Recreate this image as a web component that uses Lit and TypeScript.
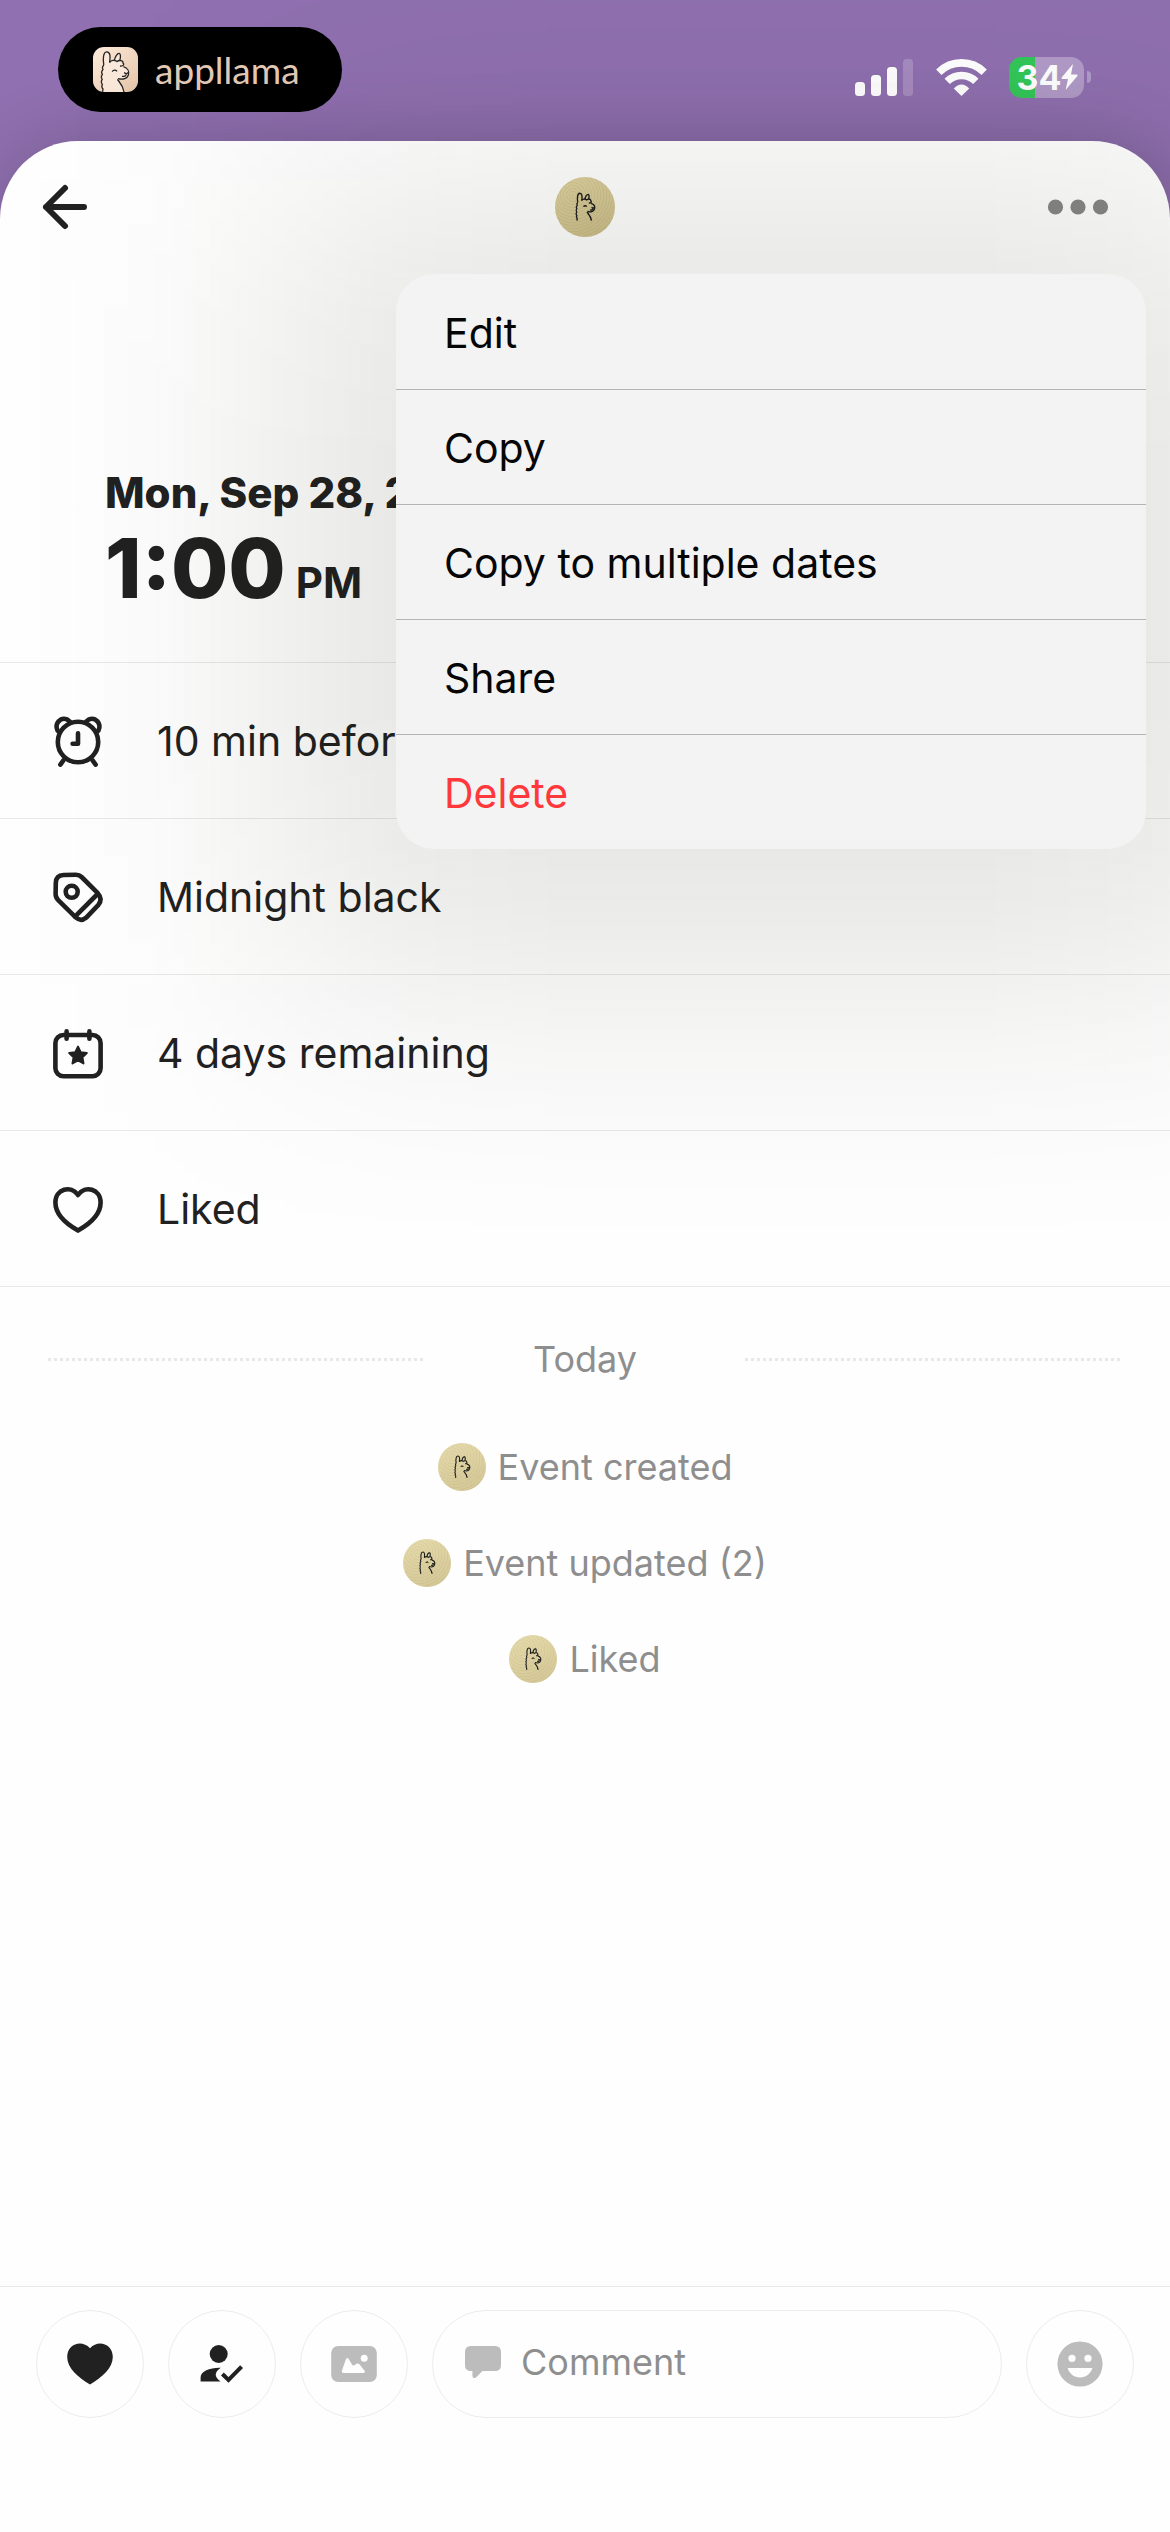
import { LitElement, html, css, svg } from 'lit';
import { customElement, property, state } from 'lit/decorators.js';
import { classMap } from 'lit/directives/class-map.js';

const llama = svg`
    <path d="M10.8 18C9.6 12 10.4 5 13.6 4.8C17.4 4.6 17.6 10 16.6 15.6" />
    <path d="M21.4 13.4C22 9.6 24.4 6.2 26.2 6.4C28 6.8 27.6 10.4 26.8 13.4" />
    <path d="M16.6 15.4C18 13 21.6 12.6 24 14.6C26.4 12.6 30.6 13.6 30 16C31.6 17.4 30.6 19.4 27 19" />
    <path d="M30.4 19.6C34.6 21 36.6 24.4 35.4 28C34.4 31.4 30 33 25 31.6" />
    <path d="M19.2 24.6C20.4 22.8 22.8 22.8 24 24.4M31 25.6L33.4 26.8L35.6 25.4M33 27.4C33 29 31 29.8 29 29.2" />
    <path d="M10.8 18Q8.6 20.4 10 22.6Q7.6 25 9.4 27.4Q7.4 30 9.2 32.4Q7.4 35 9.4 37.6Q8 40 10 42L9.6 45" />
    <path d="M24.4 32.4C26.4 35.4 30 38 31 45" />
`;

const icons: Record<string, unknown> = {
    alarm: svg`
        <circle cx="25" cy="26" r="20.2" />
        <path d="M4.6 14.6C1 7.6 7.6 .8 14 3.4L17.4 6M45.4 14.6C49 7.6 42.4 .8 36 3.4L32.6 6" />
        <path d="M25 17.4V27.8H19.6M10.4 44.4L7.4 48.6M39.6 44.4L42.6 48.6" />
    `,
    tag: svg`
        <path d="M10.5 3L23 2.8Q26.4 2.8 28.6 5L44.8 21.2Q50 27 45.4 32.8L33 45.8Q28 50 23 45.6L5.2 28.2Q2.6 25.6 2.6 22L2.8 11Q3 3.2 10.5 3Z" />
        <path d="M43.6 23L22 44.6" />
        <circle cx="18.7" cy="19.8" r="6" />
    `,
    calendar: svg`
        <rect x="2.4" y="7" width="45.2" height="41.2" rx="8" />
        <path d="M13.6 3.4V10.8M36.4 3.4V10.8" />
        <path class="solid" d="M25 18.6L27.7 24.2L33.8 25L29.4 29.3L30.5 35.4L25 32.4L19.5 35.4L20.6 29.3L16.2 25L22.3 24.2Z" />
    `,
    heart: svg`
        <path d="M25 11C18 1 2.4 4.6 2.4 18.6C2.4 30.4 14 40.4 25 46.6C36 40.4 47.6 30.4 47.6 18.6C47.6 4.6 32 1 25 11Z" />
    `,
};

interface Detail {
    icon: string;
    text: string;
}

@customElement('llama-avatar')
class LlamaAvatar extends LitElement {
    static styles = css`
        :host {
            display: block;
            width: 48px;
            height: 48px;
            border-radius: 50%;
            background: repeating-radial-gradient(
                    circle at 30% 30%,
                    rgba(120, 100, 40, 0.06) 0 1px,
                    transparent 1px 3px
                ),
                linear-gradient(160deg, #e6dbac, #d2c594);
        }

        :host([large]) {
            width: 60px;
            height: 60px;
            background: repeating-radial-gradient(
                    circle at 30% 30%,
                    rgba(120, 100, 40, 0.08) 0 1px,
                    transparent 1px 3px
                ),
                linear-gradient(160deg, #d4c899, #bcb07f);
        }

        svg {
            display: block;
            width: 100%;
            height: 100%;
            fill: none;
            stroke: #1b1b1b;
            stroke-width: 2;
        }
    `;

    @property({ type: Boolean, reflect: true }) large = false;

    render() {
        return html`
            <svg viewBox="0 0 60 60" aria-hidden="true">
                <g transform="translate(15.4 13) scale(.68)">${llama}</g>
            </svg>
        `;
    }
}

@customElement('status-bar')
class StatusBar extends LitElement {
    static styles = css`
        :host {
            display: flex;
            justify-content: space-between;
            align-items: center;
            padding: 27px 79px 29px 58px;
        }

        .pill {
            display: flex;
            align-items: center;
            gap: 17px;
            box-sizing: border-box;
            height: 85px;
            padding: 0 42px 0 35px;
            border-radius: 43px;
            background: #000;
            color: #e3cbb8;
            font-family: 'Lato', sans-serif;
            font-size: 37px;
            line-height: 44px;
        }

        .logo {
            width: 45px;
            height: 45px;
            border-radius: 11px;
            background: linear-gradient(135deg, #fdebdc, #e6c6a9);
            fill: none;
            stroke: #262626;
            stroke-width: 1.3;
        }

        .indicators {
            display: flex;
            align-items: center;
            gap: 22px;
            padding-top: 15px;
            color: #fff;
        }

        .indicators svg {
            display: block;
            fill: currentColor;
        }

        .battery {
            display: flex;
            align-items: center;
            gap: 3px;
        }

        .level {
            display: flex;
            align-items: center;
            justify-content: center;
            box-sizing: border-box;
            width: 75px;
            height: 41px;
            padding-left: 2px;
            border-radius: 13px;
            background: linear-gradient(
                to right,
                #34c759 35%,
                rgba(255, 255, 255, 0.3) 35%
            );
            font-family: 'Inter', sans-serif;
            font-size: 34px;
            font-weight: 700;
            line-height: 41px;
        }

        .cap {
            width: 4px;
            height: 12px;
            border-radius: 0 4px 4px 0;
            background: rgba(255, 255, 255, 0.3);
        }
    `;

    render() {
        return html`
            <div class="pill">
                <svg class="logo" viewBox="0 0 45 45" aria-hidden="true">
                    <path
                        d="M11 18L12 6L15 6L17 15L22 13L26 7L27 14L31 19L36 25L33 31L25 32L31 45H10L9 28Z"
                        fill="#fbeadb"
                        stroke="none"
                    />
                    ${llama}
                </svg>
                <span>appllama</span>
            </div>
            <div class="indicators">
                <svg width="59" height="37" viewBox="0 0 59 37" aria-hidden="true">
                    <rect y="23" width="10" height="14" rx="3.5" />
                    <rect x="16" y="16" width="10" height="21" rx="3.5" />
                    <rect x="32" y="8" width="10" height="29" rx="3.5" />
                    <rect x="48" width="10" height="37" rx="3.5" opacity=".2" />
                </svg>
                <svg width="51" height="37" viewBox="0 0 51 37" aria-hidden="true">
                    <g fill="none" stroke="currentColor" stroke-width="7.6">
                        <path d="M2.8 13.2A32.4 32.4 0 0 1 48.2 13.2" />
                        <path d="M11.2 22.4A20.4 20.4 0 0 1 39.8 22.4" />
                    </g>
                    <path d="M25.5 37L17.8 29.6Q25.5 21.6 33.2 29.6Z" />
                </svg>
                <div class="battery">
                    <div class="level">
                        <span>34</span>
                        <svg width="17" height="26" viewBox="0 0 17 26" aria-hidden="true">
                            <path d="M12 0L.6 13.6Q0 15 1.4 15H7L4.6 26L16.4 12Q17 10.6 15.6 10.6H10Z" />
                        </svg>
                    </div>
                    <div class="cap"></div>
                </div>
            </div>
        `;
    }
}

@customElement('app-root')
class AppRoot extends LitElement {
    static styles = css`
        :host {
            display: flex;
            flex-direction: column;
            min-height: 100vh;
            overflow: hidden;
            background: #9070b0;
            color: #212121;
            font-family: 'Inter', sans-serif;
            font-size: 41px;
            line-height: 48px;
        }

        * {
            box-sizing: border-box;
        }

        button {
            display: block;
            margin: 0;
            padding: 0;
            border: none;
            background: none;
            color: inherit;
            font: inherit;
            cursor: pointer;
        }

        ul {
            margin: 0;
            padding: 0;
            list-style: none;
        }

        svg {
            display: block;
        }

        .sheet {
            display: flex;
            flex: 1;
            flex-direction: column;
            border-radius: 78px 78px 0 0;
            background: #fefefe;
            box-shadow: 0 0 70px rgba(0, 0, 0, 0.18);
        }

        header {
            position: relative;
            z-index: 1;
            display: grid;
            grid-template-columns: 1fr auto 1fr;
            align-items: center;
            padding: 36px 40px 37px;
        }

        .more {
            justify-self: end;
            padding-right: 20px;
        }

        .menu {
            position: absolute;
            top: 100%;
            right: 24px;
            width: 750px;
            max-width: calc(100% - 48px);
            border-radius: 38px;
            background: #f3f3f3;
            color: #060606;
        }

        /* wide soft shade, too large for a box-shadow blur */
        .menu::before {
            --fade: transparent, rgba(16, 16, 0, 0.004) 50px,
                rgba(16, 16, 0, 0.011) 100px, rgba(16, 16, 0, 0.021) 150px,
                rgba(16, 16, 0, 0.034) 200px, rgba(16, 16, 0, 0.05) 250px,
                rgba(16, 16, 0, 0.066) 300px, rgba(16, 16, 0, 0.081) 350px,
                rgba(16, 16, 0, 0.094) 400px, rgba(16, 16, 0, 0.11) 550px,
                rgba(16, 16, 0, 0.11) calc(100% - 550px),
                rgba(16, 16, 0, 0.094) calc(100% - 400px),
                rgba(16, 16, 0, 0.081) calc(100% - 350px),
                rgba(16, 16, 0, 0.066) calc(100% - 300px),
                rgba(16, 16, 0, 0.05) calc(100% - 250px),
                rgba(16, 16, 0, 0.034) calc(100% - 200px),
                rgba(16, 16, 0, 0.021) calc(100% - 150px),
                rgba(16, 16, 0, 0.011) calc(100% - 100px),
                rgba(16, 16, 0, 0.004) calc(100% - 50px), transparent;
            position: absolute;
            z-index: -1;
            inset: -360px -380px -400px;
            background: linear-gradient(to right, var(--fade));
            mask-image: linear-gradient(
                to bottom,
                transparent,
                rgba(0, 0, 0, 0.04) 50px,
                rgba(0, 0, 0, 0.1) 100px,
                rgba(0, 0, 0, 0.19) 150px,
                rgba(0, 0, 0, 0.31) 200px,
                rgba(0, 0, 0, 0.45) 250px,
                rgba(0, 0, 0, 0.6) 300px,
                rgba(0, 0, 0, 0.73) 350px,
                rgba(0, 0, 0, 0.85) 400px,
                #000 550px,
                #000 calc(100% - 550px),
                rgba(0, 0, 0, 0.85) calc(100% - 400px),
                rgba(0, 0, 0, 0.73) calc(100% - 350px),
                rgba(0, 0, 0, 0.6) calc(100% - 300px),
                rgba(0, 0, 0, 0.45) calc(100% - 250px),
                rgba(0, 0, 0, 0.31) calc(100% - 200px),
                rgba(0, 0, 0, 0.19) calc(100% - 150px),
                rgba(0, 0, 0, 0.1) calc(100% - 100px),
                rgba(0, 0, 0, 0.04) calc(100% - 50px),
                transparent
            );
            content: '';
            pointer-events: none;
        }

        .menu button {
            width: 100%;
            height: 115px;
            padding: 2px 48px 0;
            text-align: left;
        }

        .menu li + li button {
            border-top: 1px solid #b4b4b4;
        }

        .menu .danger {
            color: #ff383c;
        }

        .when {
            padding: 194px 105px 44px;
            border-bottom: 1px solid #e8e8e8;
            font-size: 42px;
            font-weight: 800;
        }

        .when p {
            margin: 0;
            line-height: 50px;
        }

        .when .time {
            display: flex;
            align-items: baseline;
            gap: 10px;
            font-size: 83px;
            line-height: 100px;
        }

        .time small {
            font-size: 42px;
            font-weight: 700;
            line-height: 50px;
        }

        .details li {
            display: flex;
            align-items: center;
            gap: 54px;
            height: 156px;
            padding: 0 53px;
            border-bottom: 1px solid #e8e8e8;
        }

        .details svg {
            width: 50px;
            height: 50px;
            overflow: visible;
            fill: none;
            stroke: currentColor;
            stroke-width: 4.6;
            stroke-linecap: round;
            stroke-linejoin: round;
        }

        .details .solid {
            fill: currentColor;
            stroke-width: 2;
        }

        .history {
            padding: 48px;
            color: #8e8e8e;
            font-size: 36px;
        }

        .day {
            display: flex;
            align-items: center;
            text-align: center;
        }

        .day::before,
        .day::after {
            flex: 1;
            height: 3px;
            background: repeating-linear-gradient(
                to right,
                #e8e8e8 0 3px,
                transparent 3px 6px
            );
            content: '';
        }

        .day span {
            width: 320px;
        }

        .events {
            display: flex;
            flex-direction: column;
            align-items: center;
            gap: 48px;
            margin-top: 60px;
        }

        .events li {
            display: flex;
            align-items: center;
            gap: 12px;
        }

        footer {
            display: flex;
            gap: 24px;
            margin-top: auto;
            padding: 23px 36px 114px;
            border-top: 1px solid #e8e8e8;
        }

        .round,
        .comment {
            height: 108px;
            border: 1px solid #ececec;
            border-radius: 54px;
        }

        .round {
            display: flex;
            flex: none;
            align-items: center;
            justify-content: center;
            width: 108px;
        }

        .muted {
            color: #bcbcbc;
        }

        .round svg,
        .comment svg {
            fill: currentColor;
        }

        .comment {
            display: flex;
            flex: 1;
            align-items: center;
            gap: 20px;
            min-width: 0;
            padding: 0 32px 4px;
        }

        .comment input {
            flex: 1;
            min-width: 0;
            padding: 0;
            border: none;
            outline: none;
            background: none;
            color: #212121;
            font: inherit;
            font-size: 36px;
        }

        .comment input::placeholder {
            color: #8e8e8e;
            opacity: 1;
        }
    `;

    @state() private _menuOpen = true;

    private _actions = ['Edit', 'Copy', 'Copy to multiple dates', 'Share', 'Delete'];

    private _details: Detail[] = [
        { icon: 'alarm', text: '10 min before' },
        { icon: 'tag', text: 'Midnight black' },
        { icon: 'calendar', text: '4 days remaining' },
        { icon: 'heart', text: 'Liked' },
    ];

    private _events = ['Event created', 'Event updated (2)', 'Liked'];

    private _toggle = () => {
        this._menuOpen = !this._menuOpen;
    };

    private _renderMenu() {
        return html`
            <ul class="menu">
                ${this._actions.map(
                    (action) => html`
                        <li>
                            <button
                                class=${classMap({ danger: action === 'Delete' })}
                                @click=${this._toggle}
                            >
                                ${action}
                            </button>
                        </li>
                    `,
                )}
            </ul>
        `;
    }

    render() {
        return html`
            <status-bar></status-bar>
            <main class="sheet">
                <header>
                    <button class="back" aria-label="Back">
                        <svg width="50" height="50" viewBox="0 0 50 50" fill="none" stroke="#212121" stroke-width="6" stroke-linecap="round" stroke-linejoin="round">
                            <path d="M44 25H6M25 6L6 25L25 44" />
                        </svg>
                    </button>
                    <llama-avatar large></llama-avatar>
                    <button class="more" aria-label="More" @click=${this._toggle}>
                        <svg width="64" height="40" viewBox="0 0 64 40" fill="#7f7f7e">
                            <circle cx="9.5" cy="20" r="7.6" />
                            <circle cx="32" cy="20" r="7.6" />
                            <circle cx="54.5" cy="20" r="7.6" />
                        </svg>
                    </button>
                    ${this._menuOpen ? this._renderMenu() : ''}
                </header>
                <section class="when">
                    <p>Mon, Sep 28, 2026</p>
                    <p class="time"><span>1:00</span><small>PM</small></p>
                </section>
                <ul class="details">
                    ${this._details.map(
                        ({ icon, text }) => html`
                            <li>
                                <svg viewBox="0 0 50 50" aria-hidden="true">${icons[icon]}</svg>
                                <span>${text}</span>
                            </li>
                        `,
                    )}
                </ul>
                <section class="history">
                    <div class="day"><span>Today</span></div>
                    <ul class="events">
                        ${this._events.map(
                            (event) => html`
                                <li>
                                    <llama-avatar></llama-avatar>
                                    <span>${event}</span>
                                </li>
                            `,
                        )}
                    </ul>
                </section>
                <footer>
                    <button class="round" aria-label="Like">
                        <svg width="48" height="48" viewBox="0 0 48 48">
                            <path d="M24 44.5C12 37.5 1.2 28 1.2 17C1.2 4 15.6 -1 24 8.2C32.4 -1 46.8 4 46.8 17C46.8 28 36 37.5 24 44.5Z" />
                        </svg>
                    </button>
                    <button class="round" aria-label="Attendance">
                        <svg width="48" height="48" viewBox="0 0 48 48">
                            <circle cx="20.7" cy="14" r="9" />
                            <path d="M2.6 41.6V37.4C2.6 31 12.6 27.4 22.8 27.8C16 32.6 16.2 36.8 22.6 41.6Z" />
                            <path d="M24.4 34L30.5 40L43.6 26.6" fill="none" stroke="currentColor" stroke-width="4" />
                        </svg>
                    </button>
                    <button class="round muted" aria-label="Add photo">
                        <svg width="48" height="48" viewBox="0 0 48 48">
                            <rect x="1.2" y="6" width="45.6" height="36" rx="7" />
                            <g fill="#fefefe">
                                <path d="M11.8 31L15.8 19.6Q17.4 16.6 19 19.4L22 24.6Q23.2 26.4 25 24.8Q28 22.4 29.6 24.4L34.8 31Q35.4 33 33.4 33H13.6Q11.4 33 11.8 31Z" />
                                <circle cx="34.2" cy="18.3" r="3.5" />
                            </g>
                        </svg>
                    </button>
                    <label class="comment muted">
                        <svg width="36" height="32" viewBox="0 0 36 32" aria-hidden="true">
                            <path d="M6 0H30Q36 0 36 6V19Q36 25 30 25H17.4L11 31.4Q7.6 33.4 7.4 29.6V25H6Q0 25 0 19V6Q0 0 6 0Z" />
                        </svg>
                        <input type="text" placeholder="Comment" aria-label="Comment" />
                    </label>
                    <button class="round muted" aria-label="Emoji">
                        <svg width="48" height="48" viewBox="0 0 48 48">
                            <circle cx="24" cy="24" r="22.6" />
                            <g fill="#fefefe">
                                <circle cx="16" cy="18.3" r="3.6" />
                                <circle cx="32" cy="18.3" r="3.6" />
                                <path d="M11.6 28H36.4C34.4 34 30 37.4 24 37.4C18 37.4 13.6 34 11.6 28Z" />
                            </g>
                        </svg>
                    </button>
                </footer>
            </main>
        `;
    }
}
